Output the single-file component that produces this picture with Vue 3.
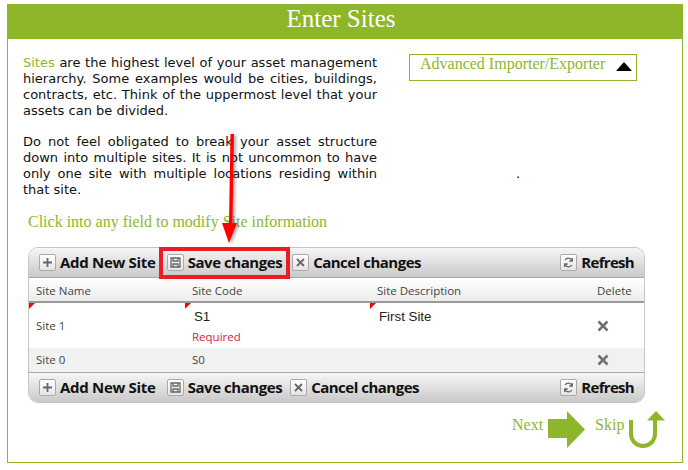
<script setup>
const intro_lines = [
   'are the highest level of your asset management hierarchy. Some examples would be cities, buildings, contracts, etc. Think of the uppermost level that your assets can be divided.',
]
const second_para = 'Do not feel obligated to break your asset structure down into multiple sites. It is not uncommon to have only one site with multiple locations residing within that site.'
const columns = ['Site Name', 'Site Code', 'Site Description', 'Delete']
</script>

<template>
   <div class="page">
      <div class="panel">
         <h1 class="title">Enter Sites</h1>
         <div class="intro">
            <div class="intro_text">
               <p><span class="green_word">Sites</span> {{ intro_lines[0] }}</p>
               <p>{{ second_para }}</p>
            </div>
            <div class="advanced">
               <span>Advanced Importer/Exporter</span>
               <i class="up_tri"></i>
            </div>
            <span class="dot">.</span>
         </div>
         <div class="hint">Click into any field to modify Site information</div>

         <div class="grid">
            <div class="toolbar top">
               <button class="btn add"><span class="ico"><svg viewBox="0 0 15 15"><path d="M7.500 3v9M3 7.500h9" /></svg></span>Add New Site</button>
               <button class="btn save"><span class="ico"><svg viewBox="0 0 15 15"><path class="thin" d="M3 3h9v9H3zM5 3v3h5V3M5 12V9h5v3" /></svg></span>Save changes</button>
               <button class="btn"><span class="ico"><svg viewBox="0 0 15 15"><path d="M4 4l7 7M11 4l-7 7" /></svg></span>Cancel changes</button>
               <button class="btn refresh"><span class="ico"><svg viewBox="0 0 15 15"><path class="thin" d="M11 5.500a4 4 0 0 0-7-0.500M4 9.500a4 4 0 0 0 7 0.500M11.300 3v3h-3M3.700 12V9h3" /></svg></span>Refresh</button>
            </div>
            <div class="row head">
               <div v-for="col in columns" :key="col" class="cell">{{ col }}</div>
            </div>
            <div class="row edited">
               <div class="cell dirty name_cell">Site 1</div>
               <div class="cell dirty code_cell">
                  <span class="typed">S1</span>
                  <span class="required">Required</span>
               </div>
               <div class="cell dirty desc_cell"><span class="typed">First Site</span></div>
               <div class="cell del_cell"><svg class="del" viewBox="0 0 12 12"><path d="M1.500 1.500l9 9M10.500 1.500l-9 9" /></svg></div>
            </div>
            <div class="row alt">
               <div class="cell">Site 0</div>
               <div class="cell">S0</div>
               <div class="cell"></div>
               <div class="cell del_cell"><svg class="del" viewBox="0 0 12 12"><path d="M1.500 1.500l9 9M10.500 1.500l-9 9" /></svg></div>
            </div>
            <div class="toolbar bottom">
               <button class="btn add"><span class="ico"><svg viewBox="0 0 15 15"><path d="M7.500 3v9M3 7.500h9" /></svg></span>Add New Site</button>
               <button class="btn save"><span class="ico"><svg viewBox="0 0 15 15"><path class="thin" d="M3 3h9v9H3zM5 3v3h5V3M5 12V9h5v3" /></svg></span>Save changes</button>
               <button class="btn"><span class="ico"><svg viewBox="0 0 15 15"><path d="M4 4l7 7M11 4l-7 7" /></svg></span>Cancel changes</button>
               <button class="btn refresh"><span class="ico"><svg viewBox="0 0 15 15"><path class="thin" d="M11 5.500a4 4 0 0 0-7-0.500M4 9.500a4 4 0 0 0 7 0.500M11.300 3v3h-3M3.700 12V9h3" /></svg></span>Refresh</button>
            </div>
         </div>

         <div class="wizard_nav">
            <span class="nav_word">Next</span>
            <svg class="next_arrow" width="38" height="37" viewBox="0 0 38 37"><path d="M0 8h19V0l18 18.500L19 37V27H0z" /></svg>
            <span class="nav_word skip">Skip</span>
            <svg class="skip_arrow" width="38" height="38" viewBox="0 0 38 38"><path d="M3 9v14a12 12 0 0 0 24 0V9" fill="none" stroke-width="4" /><path class="head_fill" d="M19 9.500L28 0l9 9.500z" /></svg>
         </div>
      </div>

      <!-- red callout drawn on top of the screenshot -->
      <div class="callout_box"></div>
      <svg class="callout_arrow" width="30" height="112" viewBox="0 0 30 112">
         <defs>
            <filter id="shadow" x="-30%" y="-5%" width="170%" height="110%">
               <feDropShadow dx="2" dy="1" stdDeviation="1.500" flood-color="#000" flood-opacity="0.35" />
            </filter>
         </defs>
         <path d="M11.500 0H15l-1.500 89H18l-8 20-7-20h7z" fill="#f00" filter="url(#shadow)" />
      </svg>
   </div>
</template>

<style>
html, body {
   background: #fff;
}
</style>

<style scoped>
.page {
   position: relative;
   width: 688px;
   height: 470px;
   overflow: hidden;
   padding: 4px 5px 0 7px;
   box-sizing: border-box;
}
.panel {
   height: 459px;
   box-sizing: border-box;
   border: 1px solid #8db729;
   border-top: 0;
}
.title {
   margin: 0;
   height: 35px;
   padding-right: 8px;
   background: #8db729;
   color: #fff;
   text-align: center;
   font: 400 25px/29px "Liberation Serif", serif;
}
.intro {
   position: relative;
   display: flex;
   height: 174px;
   padding: 16px 0 0 15px;
   box-sizing: border-box;
}
.intro_text {
   width: 354px;
   font: 13px/16px "DejaVu Sans", Verdana, sans-serif;
   color: #111;
}
.intro_text p {
   margin: 0 0 15px;
   text-align: justify;
}
.green_word {
   color: #8db729;
}
.advanced {
   display: flex;
   align-items: flex-start;
   justify-content: space-between;
   width: 228px;
   height: 27px;
   margin: -1px 0 0 32px;
   padding: 0 4px 0 10px;
   box-sizing: border-box;
   border: 1px solid #8db729;
   font: 16px/18px "Liberation Serif", serif;
   color: #8db729;
}
.up_tri {
   width: 0;
   height: 0;
   margin-top: 7px;
   border-left: 8px solid transparent;
   border-right: 8px solid transparent;
   border-bottom: 9px solid #000;
}
.dot {
   position: absolute;
   left: 508px;
   top: 127px;
   font: 13px/16px "DejaVu Sans", sans-serif;
}
.hint {
   padding-left: 20px;
   height: 34px;
   font: 16px/18px "Liberation Serif", serif;
   color: #8db729;
}
.grid {
   width: 617px;
   margin-left: 20px;
   box-sizing: border-box;
   border: 1px solid #c5c5c5;
   border-radius: 10px;
   overflow: hidden;
   font-family: "Open Sans", sans-serif;
}
.toolbar {
   display: flex;
   align-items: center;
   height: 29px;
   padding-left: 10px;
   background: linear-gradient(#f6f6f6, #c9c9c9);
}
.toolbar.top {
   border-bottom: 1px solid #aaa;
}
.toolbar.bottom {
   border-top: 1px solid #aaa;
}
.btn {
   display: flex;
   align-items: center;
   gap: 4px;
   margin-right: 10px;
   padding: 0 0 2px;
   border: 0;
   background: none;
   font: 700 15px/18px "Open Sans", sans-serif;
   letter-spacing: -0.5px;
   color: #111;
   white-space: nowrap;
}
.btn .ico {
   margin-bottom: -2px;
}
.btn.add {
   margin-right: 11px;
   letter-spacing: -0.3px;
}
.btn.save {
   letter-spacing: -0.45px;
}
.toolbar.bottom .btn.save {
   margin-right: 8px;
}
.btn.refresh {
   margin: 0 10px 0 auto;
   letter-spacing: -0.7px;
}
.ico {
   display: block;
   flex: none;
   width: 17px;
   height: 17px;
   box-sizing: border-box;
   border: 1px solid #aaa;
   border-radius: 2px;
   background: linear-gradient(#fff, #e4e4e4);
}
.ico svg {
   display: block;
   width: 15px;
   height: 15px;
   fill: none;
   stroke: #666;
   stroke-width: 1.800;
}
.ico svg .thin {
   stroke-width: 1.300;
}
.row {
   display: grid;
   grid-template-columns: 156px 185px 213px 1fr;
   font-size: 11.500px;
   color: #444;
}
.cell {
   position: relative;
   padding-left: 7px;
}
.head {
   height: 25px;
   line-height: 25px;
   box-sizing: border-box;
   border-bottom: 2px solid #999;
   background: linear-gradient(#fff, #ececec);
}
.head .cell:last-child {
   padding-left: 14px;
}
.edited {
   height: 45px;
   background: #fff;
}
.dirty::before {
   content: "";
   position: absolute;
   left: 0;
   top: 0;
   border-top: 6px solid #f00;
   border-right: 6px solid transparent;
}
.name_cell {
   line-height: 45px;
}
.code_cell {
   display: flex;
   flex-direction: column;
   padding-top: 6px;
}
.typed {
   padding-left: 2px;
   font: 13.300px/16px "Liberation Sans", sans-serif;
   color: #222;
}
.desc_cell {
   padding-top: 6px;
}
.required {
   margin-top: 3px;
   line-height: 17px;
   color: #e8143c;
}
.alt {
   height: 24px;
   line-height: 24px;
   background: #f1f1f1;
}
.del_cell {
   padding-left: 14px;
   padding-top: 0;
   display: flex;
   align-items: center;
}
.del {
   width: 12px;
   height: 12px;
   fill: none;
   stroke: #6f6f6f;
   stroke-width: 2.500;
}
.wizard_nav {
   display: flex;
   align-items: flex-start;
   padding: 8px 0 0 504px;
}
.nav_word {
   padding-top: 4px;
   font: 16px/20px "Liberation Serif", serif;
   color: #8db729;
}
.next_arrow {
   margin-left: 5px;
   fill: #8db729;
}
.skip {
   margin-left: 9px;
}
.skip_arrow {
   margin-left: 4px;
   stroke: #8db729;
}
.head_fill {
   fill: #8db729;
   stroke: none;
}
.callout_box {
   position: absolute;
   left: 159px;
   top: 247px;
   width: 131px;
   height: 32px;
   box-sizing: border-box;
   border: 4px solid #ed1c24;
}
.callout_arrow {
   position: absolute;
   left: 219px;
   top: 134px;
}
</style>
